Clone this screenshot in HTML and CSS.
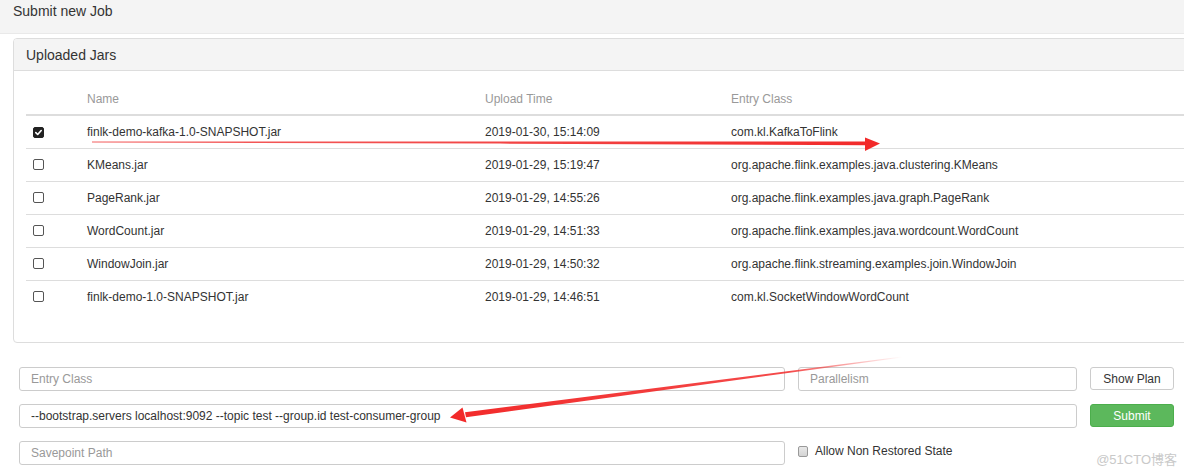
FILE: index.html
```html
<!DOCTYPE html>
<html>
<head>
<meta charset="utf-8">
<title>Submit new Job</title>
<link rel="stylesheet" href="styles.css">
</head>
<body>
<div class="page">
  <div class="page-header">Submit new Job</div>

  <div class="panel">
    <div class="panel-heading">Uploaded Jars</div>
    <div class="panel-body">
      <table class="jars">
        <thead>
          <tr>
            <th class="col-check"></th>
            <th class="col-name">Name</th>
            <th class="col-time">Upload Time</th>
            <th class="col-entry">Entry Class</th>
          </tr>
        </thead>
        <tbody>
          <tr>
            <td class="col-check"><span class="cb checked"><svg viewBox="0 0 10 10" width="9" height="9"><path d="M2 5.2 L4.1 7.2 L8 2.8" fill="none" stroke="#fff" stroke-width="1.8" stroke-linecap="round" stroke-linejoin="round"/></svg></span></td>
            <td>finlk-demo-kafka-1.0-SNAPSHOT.jar</td>
            <td>2019-01-30, 15:14:09</td>
            <td>com.kl.KafkaToFlink</td>
          </tr>
          <tr>
            <td class="col-check"><span class="cb"></span></td>
            <td>KMeans.jar</td>
            <td>2019-01-29, 15:19:47</td>
            <td>org.apache.flink.examples.java.clustering.KMeans</td>
          </tr>
          <tr>
            <td class="col-check"><span class="cb"></span></td>
            <td>PageRank.jar</td>
            <td>2019-01-29, 14:55:26</td>
            <td>org.apache.flink.examples.java.graph.PageRank</td>
          </tr>
          <tr>
            <td class="col-check"><span class="cb"></span></td>
            <td>WordCount.jar</td>
            <td>2019-01-29, 14:51:33</td>
            <td>org.apache.flink.examples.java.wordcount.WordCount</td>
          </tr>
          <tr>
            <td class="col-check"><span class="cb"></span></td>
            <td>WindowJoin.jar</td>
            <td>2019-01-29, 14:50:32</td>
            <td>org.apache.flink.streaming.examples.join.WindowJoin</td>
          </tr>
          <tr>
            <td class="col-check"><span class="cb"></span></td>
            <td>finlk-demo-1.0-SNAPSHOT.jar</td>
            <td>2019-01-29, 14:46:51</td>
            <td>com.kl.SocketWindowWordCount</td>
          </tr>
        </tbody>
      </table>
    </div>
  </div>

  <form class="job-form">
    <input class="field" type="text" placeholder="Entry Class">
    <input class="field" type="text" placeholder="Parallelism">
    <button class="btn btn-default" type="button">Show Plan</button>

    <input class="field span2" type="text" value="--bootstrap.servers localhost:9092 --topic test --group.id test-consumer-group">
    <button class="btn btn-success" type="button">Submit</button>

    <input class="field" type="text" placeholder="Savepoint Path">
    <label class="check-label"><span class="cb gray"></span>Allow Non Restored State</label>
  </form>

  <div class="watermark">@51CTO博客</div>

  <svg class="annotations" width="1184" height="474" viewBox="0 0 1184 474">
    <defs>
      <linearGradient id="fade1" x1="92" y1="0" x2="880" y2="0" gradientUnits="userSpaceOnUse">
        <stop offset="0" stop-color="#f03a3a" stop-opacity="0.8"/>
        <stop offset="1" stop-color="#f22a2a" stop-opacity="1"/>
      </linearGradient>
      <linearGradient id="fade2" x1="902" y1="357" x2="450" y2="417" gradientUnits="userSpaceOnUse">
        <stop offset="0" stop-color="#f22a2a" stop-opacity="0"/>
        <stop offset="0.25" stop-color="#f22a2a" stop-opacity="0.85"/>
        <stop offset="1" stop-color="#f22a2a" stop-opacity="1"/>
      </linearGradient>
    </defs>
    <polygon points="92,141.6 500,141.6 867,141.4 867,145.2 500,143.6 92,142.6" fill="url(#fade1)"/>
    <polygon points="865,137.5 880,143.5 865,151" fill="#f22a2a"/>
    <polygon points="902,356.6 902,357.4 466,417.2 465,412.2" fill="url(#fade2)"/>
    <polygon points="450,417.5 462.5,407.5 466.5,422.5" fill="#f22a2a"/>
  </svg>
</div>
</body>
</html>
```

FILE: styles.css
```css
html, body {
  margin: 0;
  padding: 0;
  background: #fff;
}

body {
  font-family: "Liberation Sans", Arial, Helvetica, sans-serif;
  color: #333;
  width: 1184px;
  height: 474px;
  overflow: hidden;
}

.page {
  position: relative;
  width: 1184px;
  height: 474px;
}

.page-header {
  height: 33px;
  background: #f4f4f4;
  border-bottom: 1px solid #e9e9e9;
  padding-left: 13px;
  font-size: 14px;
  line-height: 22px;
  color: #333;
}

.panel {
  margin: 4px -40px 0 13px;
  border: 1px solid #ddd;
  border-radius: 4px;
  background: #fff;
}

.panel-heading {
  height: 31px;
  line-height: 32px;
  padding: 0 12px;
  background: #f4f4f4;
  border-bottom: 1px solid #ddd;
  border-radius: 3px 3px 0 0;
  font-size: 14px;
  color: #333;
}

.panel-body {
  padding: 11px 12px 29px 12px;
}

.jars {
  width: 100%;
  border-collapse: collapse;
  font-size: 12px;
  color: #333;
}

.jars th {
  text-align: left;
  font-weight: normal;
  color: #999;
  padding: 9px 8px 7px 8px;
  line-height: 16px;
  border-bottom: 2px solid #ddd;
}

.jars td {
  padding: 8px 8px 8px 8px;
  line-height: 16px;
  border-top: 1px solid #ddd;
  white-space: nowrap;
}

.jars .col-check {
  width: 37px;
}

.jars .col-name {
  width: 382px;
}

.jars .col-time {
  width: 230px;
}

.cb {
  display: inline-flex;
  align-items: center;
  justify-content: center;
  box-sizing: border-box;
  width: 11px;
  height: 11px;
  border: 1px solid #555;
  border-radius: 2px;
  background: #fff;
  vertical-align: -1px;
  margin-left: -1px;
}

.cb.checked {
  background: #222;
  border-color: #222;
}

.cb.gray {
  width: 10px;
  height: 11px;
  border-color: #999;
  background: linear-gradient(#e8e8e8, #d4d4d4);
  margin: 0 7px 0 0;
}

.job-form {
  display: grid;
  grid-template-columns: 766px 279px 84px;
  column-gap: 13px;
  row-gap: 13px;
  padding: 24px 0 0 19px;
  margin: 0;
}

.field {
  box-sizing: border-box;
  height: 24px;
  border: 1px solid #ccc;
  border-radius: 3px;
  padding: 0 11px;
  font-family: "Liberation Sans", Arial, Helvetica, sans-serif;
  font-size: 12px;
  color: #333;
  background: #fff;
  outline: none;
  margin: 0;
}

.field::placeholder {
  color: #999;
}

.span2 {
  grid-column: 1 / 3;
}

.btn {
  box-sizing: border-box;
  height: 23px;
  border-radius: 3px;
  font-family: "Liberation Sans", Arial, Helvetica, sans-serif;
  font-size: 12px;
  padding: 0;
  margin: 0;
  cursor: pointer;
}

.btn-default {
  background: #fff;
  border: 1px solid #ccc;
  color: #333;
}

.btn-success {
  background: #5cb85c;
  border: 1px solid #4cae4c;
  color: #fff;
}

.check-label {
  display: flex;
  align-items: center;
  font-size: 12px;
  color: #333;
  height: 20px;
  margin-top: 0;
}

.watermark {
  position: absolute;
  right: 7px;
  top: 449px;
  font-family: "Liberation Sans", "Noto Sans CJK SC", sans-serif;
  font-size: 13px;
  color: #c9c9c9;
  letter-spacing: 0;
}

.annotations {
  position: absolute;
  left: 0;
  top: 0;
  pointer-events: none;
}
```
